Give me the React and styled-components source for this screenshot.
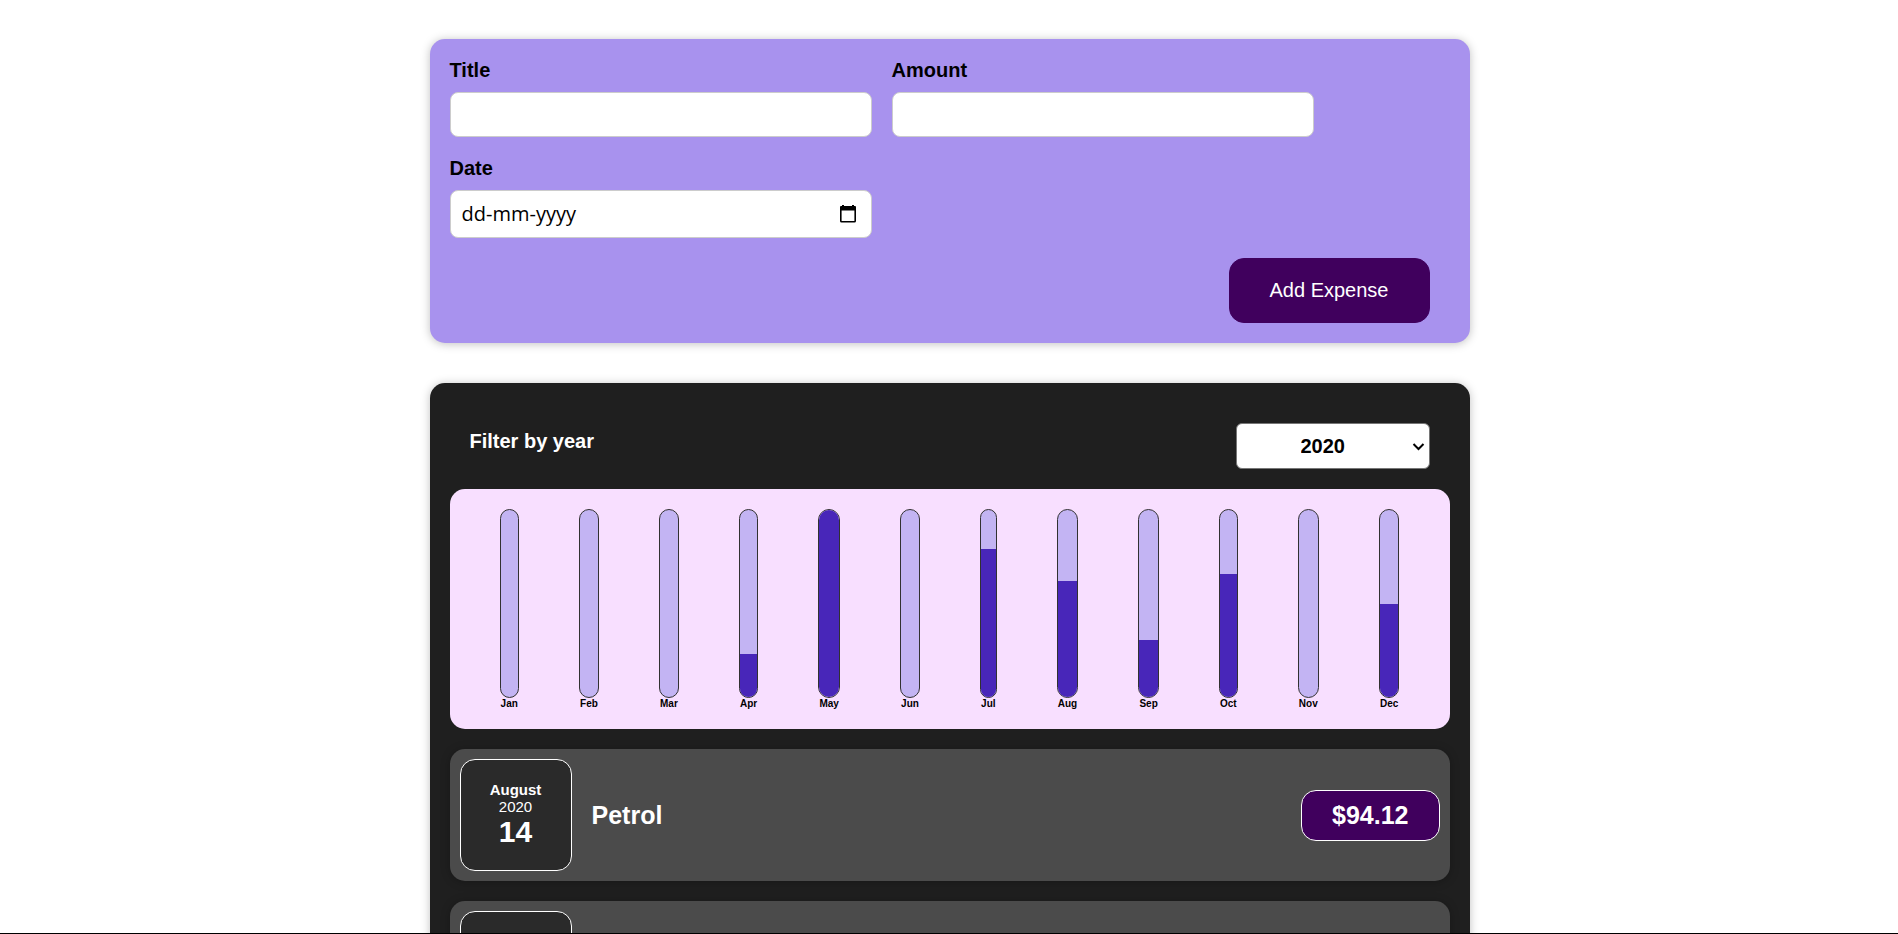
import React, { useState } from "react";
import styled, { createGlobalStyle } from "styled-components";

const GlobalStyle = createGlobalStyle`
  *, *::before, *::after { box-sizing: border-box; }
  body { margin: 0; background: #ffffff; }
  body, input, select, button { font-family: Arial, "Liberation Sans", sans-serif; }
`;

const Page = styled.main`
  height: 100vh;
  overflow-y: auto;
  scrollbar-width: none;
  border-bottom: 1px solid #000000;
  padding: 39px 0 40px 1px;
  display: flex;
  flex-direction: column;
  align-items: center;
  gap: 40px;
`;

const Card = styled.section`
  width: 95%;
  max-width: 1040px;
  flex-shrink: 0;
  padding: 20px;
  border-radius: 15px;
  background: ${(p) => p.$background};
  box-shadow: 0 1px 10px rgba(0, 0, 0, 0.25);
`;

const ExpenseForm = styled.form`
  display: flex;
  flex-direction: column;
  gap: 20px;
`;

const Controls = styled.div`
  display: flex;
  flex-wrap: wrap;
  gap: 20px;
`;

const Field = styled.div`
  width: 422px;
  max-width: 100%;
  display: flex;
  flex-direction: column;
  gap: 10px;
`;

const FieldLabel = styled.label`
  font-size: 20px;
  line-height: 23px;
  font-weight: bold;
  color: #000000;
`;

const TextInput = styled.input`
  width: 100%;
  height: 45px;
  padding: 10px;
  border: 1px solid #cccccc;
  border-radius: 8px;
  background: #ffffff;
  font-size: 20px;
`;

const DateBox = styled.div`
  display: flex;
  align-items: center;
  height: 48px;
  padding: 0 14px 0 11px;
  border: 1px solid #cccccc;
  border-radius: 8px;
  background: #ffffff;
`;

const DateInput = styled.input`
  flex: 1;
  min-width: 0;
  padding: 0;
  border: 0;
  outline: 0;
  background: transparent;
  font-family: "Open Sans", "Noto Sans", sans-serif;
  font-size: 20px;
  line-height: 26px;
  color: #000000;
  &::placeholder { color: #000000; opacity: 1; }
`;

const PickerButton = styled.button`
  display: flex;
  padding: 0;
  border: 0;
  background: none;
  cursor: pointer;
`;

const FormActions = styled.div`
  display: flex;
  justify-content: flex-end;
  padding-right: 20px;
`;

const AddButton = styled.button`
  padding: 20px 40px;
  border: 1px solid #40005d;
  border-radius: 15px;
  background: #40005d;
  color: #ffffff;
  font-size: 20px;
  line-height: 23px;
  cursor: pointer;
`;

const FilterBar = styled.div`
  display: flex;
  align-items: center;
  justify-content: space-between;
  padding: 20px;
`;

const FilterLabel = styled.label`
  margin-bottom: 10px;
  font-size: 20px;
  line-height: 23px;
  font-weight: bold;
  color: #ffffff;
`;

const SelectBox = styled.div`
  position: relative;
  display: flex;
`;

const YearSelect = styled.select`
  appearance: none;
  height: 46px;
  padding: 10px 83px 10px 64px;
  border: 1px solid #767676;
  border-radius: 6px;
  background: #ffffff;
  color: #000000;
  font-size: 20px;
  font-weight: bold;
`;

const SelectArrow = styled.svg`
  position: absolute;
  top: 50%;
  right: 5px;
  margin-top: -4px;
  pointer-events: none;
`;

const Chart = styled.div`
  display: flex;
  justify-content: space-around;
  height: 240px;
  padding: 20px;
  border-radius: 15px;
  background: #f8dfff;
`;

const ChartColumn = styled.div`
  display: flex;
  flex-direction: column;
  align-items: center;
`;

const BarTrack = styled.div`
  box-sizing: content-box;
  flex: 1;
  width: 100%;
  display: flex;
  flex-direction: column;
  justify-content: flex-end;
  overflow: hidden;
  border: 1px solid #313131;
  border-radius: 15px;
  background: #c3b4f3;
`;

const BarFill = styled.div`
  background: #4826b9;
`;

const MonthLabel = styled.div`
  font-size: 10px;
  line-height: 11px;
  font-weight: bold;
  color: #000000;
`;

const ExpenseList = styled.ul`
  display: flex;
  flex-direction: column;
  gap: 20px;
  margin: 20px 0 0;
  padding: 0;
  list-style: none;
`;

const ExpenseRow = styled.li`
  display: flex;
  align-items: center;
  gap: 20px;
  padding: 10px;
  border-radius: 15px;
  background: #4b4b4b;
  color: #ffffff;
  box-shadow: 0 1px 10px rgba(0, 0, 0, 0.25);
`;

const DateTile = styled.div`
  display: flex;
  flex-direction: column;
  align-items: center;
  justify-content: center;
  width: 112px;
  height: 112px;
  border: 1px solid #ffffff;
  border-radius: 15px;
  background: #2a2a2a;
`;

const TileMonth = styled.span`
  font-size: 15px;
  line-height: 17px;
  font-weight: bold;
`;

const TileYear = styled.span`
  font-size: 15px;
  line-height: 17px;
`;

const TileDay = styled.span`
  font-size: 30px;
  line-height: 34px;
  font-weight: bold;
`;

const ExpenseTitle = styled.h2`
  flex: 1;
  margin: 0;
  font-size: 25px;
  line-height: 29px;
`;

const Price = styled.div`
  padding: 10px 30px;
  border: 1px solid #ffffff;
  border-radius: 15px;
  background: #40005d;
  font-size: 25px;
  line-height: 29px;
  font-weight: bold;
`;

const months = [
  { name: "Jan", share: 0 },
  { name: "Feb", share: 0 },
  { name: "Mar", share: 0 },
  { name: "Apr", share: 23 },
  { name: "May", share: 100 },
  { name: "Jun", share: 0 },
  { name: "Jul", share: 79 },
  { name: "Aug", share: 62 },
  { name: "Sep", share: 30.5 },
  { name: "Oct", share: 66 },
  { name: "Nov", share: 0 },
  { name: "Dec", share: 50 },
];

const expenses = [
  { id: "e1", month: "August", year: 2020, day: 14, title: "Petrol", amount: "94.12" },
  { id: "e2" },
];

function CalendarIcon() {
  return (
    <svg width="18" height="20" viewBox="0 0 18 20" aria-hidden="true">
      <path
        fill="#000000"
        fillRule="evenodd"
        d="M3 1h2v1h8V1h2v1h1a1 1 0 0 1 1 1v14a1.6 1.6 0 0 1-1.6 1.6H2.6A1.6 1.6 0 0 1 1 17V3a1 1 0 0 1 1-1h1zM2.6 6.5V17h12.8V6.5z"
      />
    </svg>
  );
}

function Expense({ item }) {
  return (
    <ExpenseRow>
      <DateTile>
        {item.month && <TileMonth>{item.month}</TileMonth>}
        {item.year && <TileYear>{item.year}</TileYear>}
        {item.day && <TileDay>{item.day}</TileDay>}
      </DateTile>
      {item.title && <ExpenseTitle>{item.title}</ExpenseTitle>}
      {item.amount && <Price>${item.amount}</Price>}
    </ExpenseRow>
  );
}

export default function App() {
  const [year, setYear] = useState("2020");
  return (
    <>
      <GlobalStyle />
      <Page>
        <Card $background="#a892ee">
          <ExpenseForm onSubmit={(e) => e.preventDefault()}>
            <Controls>
              <Field>
                <FieldLabel htmlFor="title">Title</FieldLabel>
                <TextInput id="title" type="text" />
              </Field>
              <Field>
                <FieldLabel htmlFor="amount">Amount</FieldLabel>
                <TextInput id="amount" type="number" min="0.01" step="0.01" />
              </Field>
              <Field>
                <FieldLabel htmlFor="date">Date</FieldLabel>
                <DateBox>
                  <DateInput id="date" type="text" placeholder="dd-mm-yyyy" />
                  <PickerButton type="button" aria-label="Show date picker">
                    <CalendarIcon />
                  </PickerButton>
                </DateBox>
              </Field>
            </Controls>
            <FormActions>
              <AddButton type="submit">Add Expense</AddButton>
            </FormActions>
          </ExpenseForm>
        </Card>
        <Card $background="#1f1f1f">
          <FilterBar>
            <FilterLabel htmlFor="year">Filter by year</FilterLabel>
            <SelectBox>
              <YearSelect id="year" value={year} onChange={(e) => setYear(e.target.value)}>
                <option value="2022">2022</option>
                <option value="2021">2021</option>
                <option value="2020">2020</option>
                <option value="2019">2019</option>
              </YearSelect>
              <SelectArrow width="13" height="9" viewBox="0 0 13 9" aria-hidden="true">
                <path d="M1.5 2l5 5 5-5" fill="none" stroke="#000000" strokeWidth="2" />
              </SelectArrow>
            </SelectBox>
          </FilterBar>
          <Chart>
            {months.map((m) => (
              <ChartColumn key={m.name}>
                <BarTrack>
                  <BarFill style={{ height: `${m.share}%` }} />
                </BarTrack>
                <MonthLabel>{m.name}</MonthLabel>
              </ChartColumn>
            ))}
          </Chart>
          <ExpenseList>
            {expenses.map((item) => (
              <Expense key={item.id} item={item} />
            ))}
          </ExpenseList>
        </Card>
      </Page>
    </>
  );
}
